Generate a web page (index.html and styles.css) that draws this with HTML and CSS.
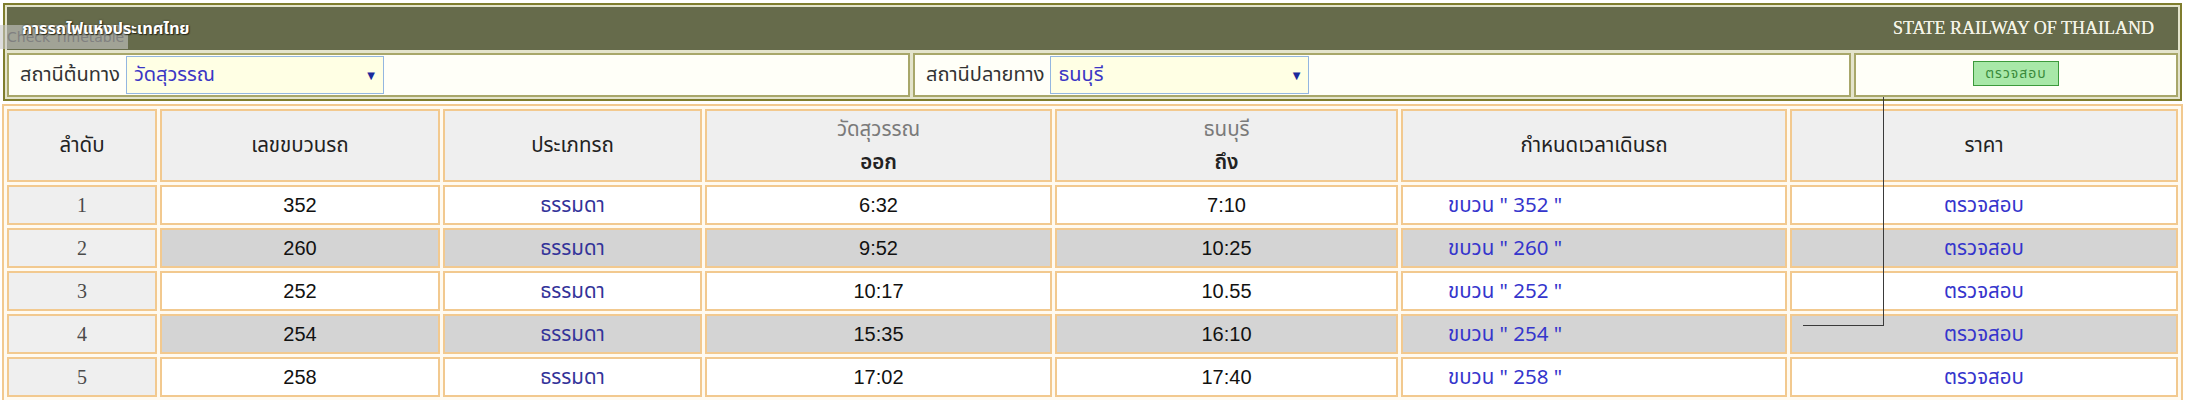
FILE: index.html
```html
<!DOCTYPE html>
<html lang="th">
<head>
<meta charset="utf-8">
<title>การรถไฟแห่งประเทศไทย</title>
<link rel="stylesheet" href="styles.css">
</head>
<body>
<div class="page">
  <div class="tip">Check Timetable</div>
  <div class="frame">
    <div class="frame-head">
      <span class="title-th">การรถไฟแห่งประเทศไทย</span>
      <span class="title-en">STATE RAILWAY OF THAILAND</span>
    </div>
    <div class="frame-row">
      <div class="fcell">
        <span class="flabel">สถานีต้นทาง</span>
        <div class="select select-from"><span class="sel-text">วัดสุวรรณ</span><span class="arrow">▼</span></div>
      </div>
      <div class="fcell">
        <span class="flabel">สถานีปลายทาง</span>
        <div class="select select-to"><span class="sel-text">ธนบุรี</span><span class="arrow">▼</span></div>
      </div>
      <div class="fcell fcell-center">
        <button class="btn" type="button">ตรวจสอบ</button>
      </div>
    </div>
  </div>

  <div class="timetable">
    <div class="th">ลำดับ</div>
    <div class="th">เลขขบวนรถ</div>
    <div class="th">ประเภทรถ</div>
    <div class="th th-two"><span class="th-sub">วัดสุวรรณ</span><span class="th-main">ออก</span></div>
    <div class="th th-two"><span class="th-sub">ธนบุรี</span><span class="th-main">ถึง</span></div>
    <div class="th">กำหนดเวลาเดินรถ</div>
    <div class="th">ราคา</div>

    <div class="td no">1</div>
    <div class="td num">352</div>
    <div class="td type">ธรรมดา</div>
    <div class="td num">6:32</div>
    <div class="td num">7:10</div>
    <div class="td link left">ขบวน " 352 "</div>
    <div class="td link">ตรวจสอบ</div>

    <div class="td no">2</div>
    <div class="td num alt">260</div>
    <div class="td type alt">ธรรมดา</div>
    <div class="td num alt">9:52</div>
    <div class="td num alt">10:25</div>
    <div class="td link left alt">ขบวน " 260 "</div>
    <div class="td link alt">ตรวจสอบ</div>

    <div class="td no">3</div>
    <div class="td num">252</div>
    <div class="td type">ธรรมดา</div>
    <div class="td num">10:17</div>
    <div class="td num">10.55</div>
    <div class="td link left">ขบวน " 252 "</div>
    <div class="td link">ตรวจสอบ</div>

    <div class="td no">4</div>
    <div class="td num alt">254</div>
    <div class="td type alt">ธรรมดา</div>
    <div class="td num alt">15:35</div>
    <div class="td num alt">16:10</div>
    <div class="td link left alt">ขบวน " 254 "</div>
    <div class="td link alt">ตรวจสอบ</div>

    <div class="td no">5</div>
    <div class="td num">258</div>
    <div class="td type">ธรรมดา</div>
    <div class="td num">17:02</div>
    <div class="td num">17:40</div>
    <div class="td link left">ขบวน " 258 "</div>
    <div class="td link">ตรวจสอบ</div>
  </div>

  <div class="connector"></div>
</div>
</body>
</html>
```

FILE: styles.css
```css
* { box-sizing: border-box; }

html, body {
  margin: 0;
  padding: 0;
  background: #ffffff;
}

body {
  font-family: "Noto Sans Thai", "Noto Sans Thai Looped", "Loma", "Garuda", "Noto Sans", "DejaVu Sans", sans-serif;
  color: #333333;
}

.page {
  position: relative;
  width: 2185px;
  height: 400px;
  overflow: hidden;
}

/* ---------- top frame ---------- */
.frame {
  margin: 3px 3px 0;
  border: 2px solid #7f7d2e;
  padding: 2px;
  background: #e4e4cc;
  display: flex;
  flex-direction: column;
  gap: 3px;
}

.frame-head {
  height: 43px;
  background: #666b4b;
  display: flex;
  align-items: center;
  justify-content: space-between;
  padding: 0 24px 0 15px;
}

.title-th {
  position: relative;
  z-index: 3;
  font-size: 16.5px;
  font-weight: bold;
  color: #ffffff;
  text-shadow: 0 0 2px #2a2a1a, 1px 1px 1px #2a2a1a;
  letter-spacing: -0.2px;
}

.title-en {
  font-family: "Liberation Serif", "DejaVu Serif", serif;
  font-size: 18px;
  color: #f3f3e6;
  text-shadow: 0 0 0.4px #f3f3e6;
}

.frame-row {
  display: grid;
  grid-template-columns: 903px 938px 1fr;
  gap: 3px;
  height: 44px;
}

.fcell {
  border: 2px solid #a8a76a;
  background: #fffff8;
  display: flex;
  align-items: center;
  padding-left: 11px;
  gap: 6px;
}

.fcell-center {
  justify-content: center;
  padding-left: 0;
}

.flabel {
  font-size: 20px;
  color: #333333;
}

.select {
  height: 38px;
  border: 1px solid #93b6e0;
  background: #ffffe4;
  display: flex;
  align-items: center;
  justify-content: space-between;
  padding: 0 8px 0 7px;
}

.select-from { width: 258px; }
.select-to { width: 259px; }

.sel-text {
  font-size: 20px;
  color: #3b36c4;
}

.arrow {
  font-family: "DejaVu Sans", sans-serif;
  font-size: 10px;
  color: #1b2a9c;
}

.btn {
  width: 86px;
  height: 25px;
  border: 1px solid #3c9a3c;
  background: #a8e8a8;
  color: #3a8a3a;
  font-family: inherit;
  font-size: 14px;
  letter-spacing: 1px;
  padding: 0;
  margin: 0 0 3px 0;
  cursor: pointer;
}

/* ---------- overlay tip ---------- */
.tip {
  position: absolute;
  left: 0;
  top: 25px;
  width: 128px;
  height: 24px;
  background: rgba(200, 200, 200, 0.6);
  color: #808080;
  font-family: "DejaVu Sans", "Liberation Sans", sans-serif;
  font-size: 14px;
  line-height: 24px;
  padding-left: 7px;
  z-index: 2;
}

/* ---------- timetable ---------- */
.timetable {
  margin: 3px 2px 0;
  border: 2px solid #f2c98f;
  padding: 3px;
  display: grid;
  grid-template-columns: 150px 280px 259px 347px 343px 386px 388px;
  grid-template-rows: 73px repeat(5, 40px);
  gap: 3px;
  background: #fffaf0;
}

.th, .td {
  border: 2px solid #f2c98f;
  display: flex;
  align-items: center;
  justify-content: center;
}

.th {
  background: #efefef;
  font-size: 20.5px;
  color: #222222;
}

.th-two {
  flex-direction: column;
  gap: 2px;
}

.th-sub {
  color: #7a7a7a;
}

.th-main {
  color: #222222;
  font-weight: 600;
}

.td {
  background: #ffffff;
  font-size: 20px;
}

.td.alt {
  background: #d4d4d4;
}

.td.no {
  background: #efefef;
  font-family: "Liberation Serif", serif;
  font-size: 20px;
  color: #4a4a4a;
}

.td.num {
  font-family: "Liberation Sans Narrow", "Liberation Sans", sans-serif;
  font-size: 20px;
  color: #111111;
}

.td.type {
  color: #333399;
  font-size: 20.5px;
}

.td.link {
  color: #3535cc;
  font-size: 20.5px;
}

.td.left {
  justify-content: flex-start;
  padding-left: 45px;
}

/* ---------- stray connector line ---------- */
.connector {
  position: absolute;
  left: 1803px;
  top: 97px;
  width: 81px;
  height: 229px;
  border-right: 1px solid #3a3a3a;
  border-bottom: 1px solid #3a3a3a;
  z-index: 4;
}
```
